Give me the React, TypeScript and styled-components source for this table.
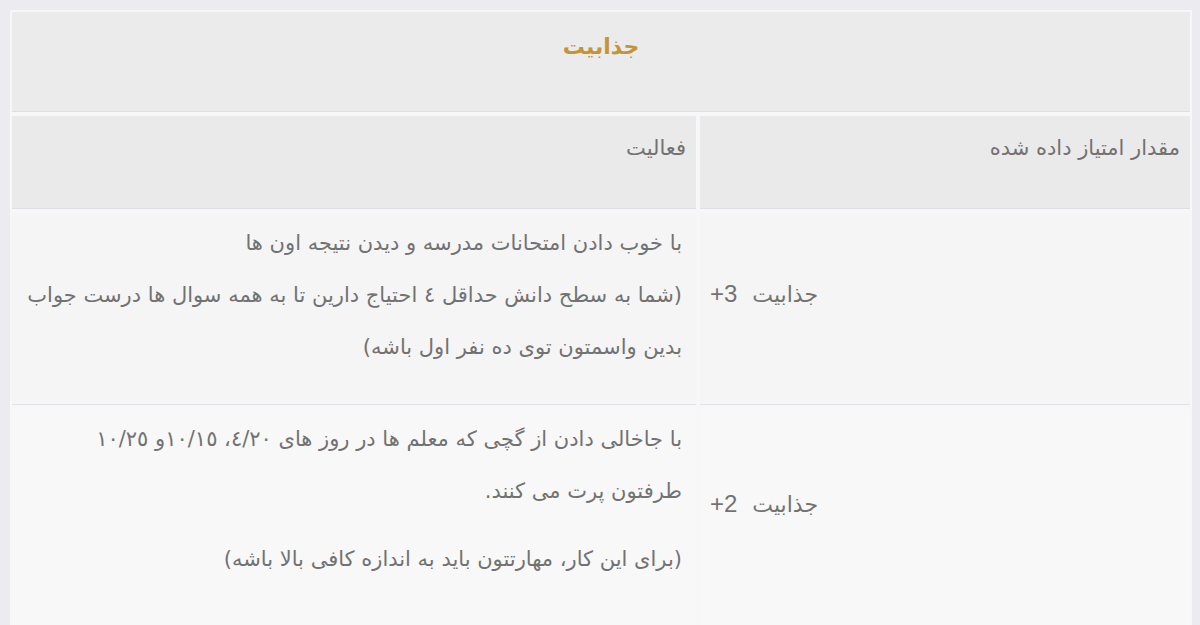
import styled, { createGlobalStyle } from 'styled-components';

const GlobalStyle = createGlobalStyle`
  html, body {
    margin: 0;
    padding: 0;
    background: #ebebf0;
  }
  body {
    font-family: "DejaVu Sans", "Noto Sans", sans-serif;
  }
`;

const Wrapper = styled.div`
  padding: 10px 8px 0 10px;
`;

const Table = styled.table`
  width: 100%;
  border-collapse: separate;
  border-spacing: 0;
  direction: rtl;
  color: #727272;
  font-size: 21px;
`;

const TitleCell = styled.th`
  height: 78px;
  background: #ebebeb;
  border: 2px solid #f7f7fa;
  box-shadow: inset 0 -1px 0 #dfdfe3;
  color: #c39537;
  font-size: 22px;
  font-weight: bold;
  text-align: center;
  vertical-align: top;
  padding: 22px 0 0;
`;

const HeadCell = styled.th<{ $wide?: boolean }>`
  width: ${p => (p.$wide ? 'auto' : '466px')};
  height: 87px;
  background: #eaeaea;
  border: 2px solid #f7f7fa;
  box-shadow: inset 0 -1px 0 #dfdfe3;
  font-weight: normal;
  text-align: right;
  vertical-align: top;
  padding: 6px 10px 0 14px;
  line-height: 52px;
`;

const Cell = styled.td<{ $shade: string; $bottom: number }>`
  background: ${p => p.$shade};
  border: 2px solid #f7f7fa;
  box-shadow: inset 0 -1px 0 #e2e2e6;
  text-align: right;
  vertical-align: middle;
  padding: 4px 14px ${p => p.$bottom}px 10px;
  line-height: 52px;
`;

const Paragraph = styled.p`
  margin: 0;
  & + & {
    margin-top: 16px;
  }
`;

const Score = styled.span`
  font-family: "Liberation Sans", Arial, sans-serif;
  font-size: 24px;
  margin-right: 8px;
`;

const ScoreCell = styled.td<{ $shade: string }>`
  background: ${p => p.$shade};
  border: 2px solid #f7f7fa;
  box-shadow: inset 0 -1px 0 #e2e2e6;
  text-align: left;
  vertical-align: middle;
  padding: 0 10px 30px 10px;
  font-size: 22px;
`;

const rows = [
  {
    score: '3+',
    shade: '#f5f5f5',
    bottom: 32,
    paragraphs: [
      [
        'با خوب دادن امتحانات مدرسه و دیدن نتیجه اون ها',
        '(شما به سطح دانش حداقل ٤ احتیاج دارین تا به همه سوال ها درست جواب بدین واسمتون توی ده نفر اول باشه)',
      ],
    ],
  },
  {
    score: '2+',
    shade: '#f8f8f8',
    bottom: 44,
    paragraphs: [
      ['با جاخالی دادن از گچی که معلم ها در روز های ٤/٢٠، ١٠/١٥و ١٠/٢٥ طرفتون پرت می کنند.'],
      ['(برای این کار، مهارتتون باید به اندازه کافی بالا باشه)'],
    ],
  },
];

export default function App() {
  return (
    <>
      <GlobalStyle />
      <Wrapper>
        <Table>
          <thead>
            <tr>
              <TitleCell colSpan={2}>جذابیت</TitleCell>
            </tr>
            <tr>
              <HeadCell>مقدار امتیاز داده شده</HeadCell>
              <HeadCell $wide>فعالیت</HeadCell>
            </tr>
          </thead>
          <tbody>
            {rows.map((row, i) => (
              <tr key={i}>
                <ScoreCell $shade={row.shade}>
                  جذابیت <Score>{row.score}</Score>
                </ScoreCell>
                <Cell $shade={row.shade} $bottom={row.bottom}>
                  {row.paragraphs.map((lines, j) => (
                    <Paragraph key={j}>
                      {lines.map((line, k) => (
                        <span key={k}>
                          {k > 0 && <br />}
                          {line}
                        </span>
                      ))}
                    </Paragraph>
                  ))}
                </Cell>
              </tr>
            ))}
          </tbody>
        </Table>
      </Wrapper>
    </>
  );
}
